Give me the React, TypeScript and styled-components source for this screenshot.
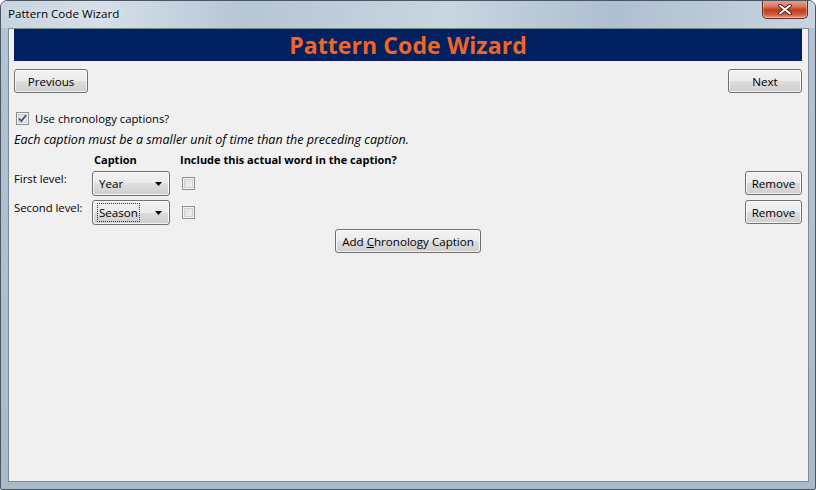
import React from "react";
import styled, { createGlobalStyle } from "styled-components";

const Global = createGlobalStyle`
  html, body { margin: 0; padding: 0; }
  body { width: 816px; height: 490px; overflow: hidden; background: #ffffff; font-family: "Open Sans", "Noto Sans", sans-serif; font-size: 11.3px; color: #000; }
  * { box-sizing: border-box; }
`;

const Window = styled.div`
  width: 816px;
  height: 490px;
  display: flex;
  flex-direction: column;
  border: 1px solid #4a5663;
  border-radius: 7px 7px 2px 2px;
  background: linear-gradient(180deg, #c2d0de 0px, #b3c3d3 30px, #a9bac9 100%);
  overflow: hidden;
`;

const TitleBar = styled.div`
  height: 27px;
  display: flex;
  align-items: flex-start;
  justify-content: space-between;
  padding: 0 7px 0 7px;
  background: linear-gradient(90deg, #c7d3df 0%, #d5dfe8 12%, #b7c6d5 30%, #c9d5e0 55%, #aebfd0 75%, #c8d4df 100%);
`;

const TitleText = styled.div`
  padding-top: 5px;
  font-size: 11.6px;
  color: #000;
  text-shadow: 0 0 6px rgba(255, 255, 255, 0.9);
`;

const CloseButton = styled.div`
  width: 46px;
  height: 19px;
  margin-top: -1px;
  border: 1px solid #5c2a22;
  border-top: none;
  border-radius: 0 0 5px 5px;
  background: linear-gradient(180deg, #e4a594 0%, #d97a63 35%, #c2391c 55%, #cf5a3c 80%, #e59a7f 100%);
  box-shadow: inset 0 0 0 1px rgba(255, 255, 255, 0.35);
  display: flex;
  align-items: center;
  justify-content: center;
`;

const Client = styled.div`
  flex: 1;
  margin: 0 6px 7px 7px;
  border: 1px solid #7c8a97;
  background: #f0f0f0;
  display: flex;
  flex-direction: column;
  padding: 0 6px 0 5px;
`;

const Banner = styled.div`
  height: 32px;
  background: #002060;
  display: flex;
  align-items: center;
  justify-content: center;
  color: #f26522;
  font-weight: 700;
  font-size: 23px;
  letter-spacing: 0.1px;
`;

const NavRow = styled.div`
  display: flex;
  justify-content: space-between;
  margin-top: 8px;
`;

const Button = styled.button<{ $w: number }>`
  width: ${(p) => p.$w}px;
  height: 24px;
  padding: 0;
  border: 1px solid #707070;
  border-radius: 3px;
  background: linear-gradient(180deg, #f2f2f2 0%, #ebebeb 50%, #dddddd 50%, #cfcfcf 100%);
  box-shadow: inset 0 0 0 1px rgba(255, 255, 255, 0.75);
  font-family: "Open Sans", "Noto Sans", sans-serif;
  font-size: 11.6px;
  color: #000;
  display: flex;
  align-items: center;
  justify-content: center;
`;

const CheckRow = styled.label`
  display: flex;
  align-items: center;
  gap: 6px;
  margin-top: 18px;
  padding-left: 2px;
  height: 14px;
`;

const Box = styled.span`
  width: 13px;
  height: 13px;
  border: 1px solid #8e8f8f;
  background: linear-gradient(135deg, #dcdcdc 0%, #f4f4f4 100%);
  box-shadow: inset 0 0 0 1px #f4f4f4, inset 0 0 0 2px #d0d0d0;
  display: flex;
  align-items: center;
  justify-content: center;
  flex: none;
`;

const Hint = styled.div`
  margin-top: 7px;
  font-style: italic;
  font-size: 12.5px;
  height: 16px;
  line-height: 16px;
  white-space: nowrap;
`;

const Grid = styled.div`
  display: grid;
  grid-template-columns: 78px 88px 1fr auto;
  row-gap: 4px;
  margin-top: 3px;
`;

const Header = styled.div<{ $indent?: number }>`
  font-weight: 700;
  font-size: 11px;
  padding-left: ${(p) => p.$indent ?? 0}px;
  height: 16px;
  line-height: 18px;
`;

const LevelLabel = styled.div`
  line-height: 16px;
  white-space: nowrap;
`;

const Combo = styled.div`
  width: 78px;
  height: 25px;
  border: 1px solid #707070;
  border-radius: 3px;
  background: linear-gradient(180deg, #f2f2f2 0%, #ebebeb 50%, #dddddd 50%, #cfcfcf 100%);
  box-shadow: inset 0 0 0 1px rgba(255, 255, 255, 0.75);
  display: flex;
  align-items: center;
  padding: 0 7px 0 4px;
  justify-content: space-between;
  font-size: 11.6px;
`;

const ComboText = styled.span<{ $focus?: boolean }>`
  padding: 1px 1px;
  border: 1px dotted ${(p) => (p.$focus ? "#333" : "transparent")};
  line-height: 15px;
`;

const BoxCell = styled.div`
  padding: 6px 0 0 2px;
`;

const Centered = styled.div`
  display: flex;
  justify-content: center;
  margin-top: 4px;
`;

const Arrow = () => (
  <svg width="7" height="4" viewBox="0 0 7 4">
    <path d="M0 0h7L3.5 4z" fill="#000" />
  </svg>
);

const Check = () => (
  <svg width="9" height="9" viewBox="0 0 9 9">
    <path d="M1 4.5l2.3 2.5L8 1.2" fill="none" stroke="#3c4f8f" strokeWidth="1.8" />
  </svg>
);

const CloseGlyph = () => (
  <svg width="14" height="11" viewBox="0 0 14 11">
    <path d="M2 1.5l10 8M12 1.5l-10 8" stroke="#3a1a14" strokeWidth="3.6" strokeLinecap="round" />
    <path d="M2 1.5l10 8M12 1.5l-10 8" stroke="#ffffff" strokeWidth="2" strokeLinecap="round" />
  </svg>
);

const levels = [
  { label: "First level:", value: "Year", focus: false },
  { label: "Second level:", value: "Season", focus: true },
];

export default function App() {
  return (
    <>
      <Global />
      <Window>
        <TitleBar>
          <TitleText>Pattern Code Wizard</TitleText>
          <CloseButton>
            <CloseGlyph />
          </CloseButton>
        </TitleBar>
        <Client>
          <Banner>Pattern Code Wizard</Banner>
          <NavRow>
            <Button $w={74}>Previous</Button>
            <Button $w={74}>Next</Button>
          </NavRow>
          <CheckRow>
            <Box>
              <Check />
            </Box>
            Use chronology captions?
          </CheckRow>
          <Hint>Each caption must be a smaller unit of time than the preceding caption.</Hint>
          <Grid>
            <div />
            <Header $indent={2}>Caption</Header>
            <Header>Include this actual word in the caption?</Header>
            <div />
            {levels.map((l) => (
              <React.Fragment key={l.label}>
                <LevelLabel>{l.label}</LevelLabel>
                <Combo>
                  <ComboText $focus={l.focus}>{l.value}</ComboText>
                  <Arrow />
                </Combo>
                <BoxCell>
                  <Box />
                </BoxCell>
                <Button $w={57}>Remove</Button>
              </React.Fragment>
            ))}
          </Grid>
          <Centered>
            <Button $w={146}>
              <span>
                Add <u>C</u>hronology Caption
              </span>
            </Button>
          </Centered>
        </Client>
      </Window>
    </>
  );
}
